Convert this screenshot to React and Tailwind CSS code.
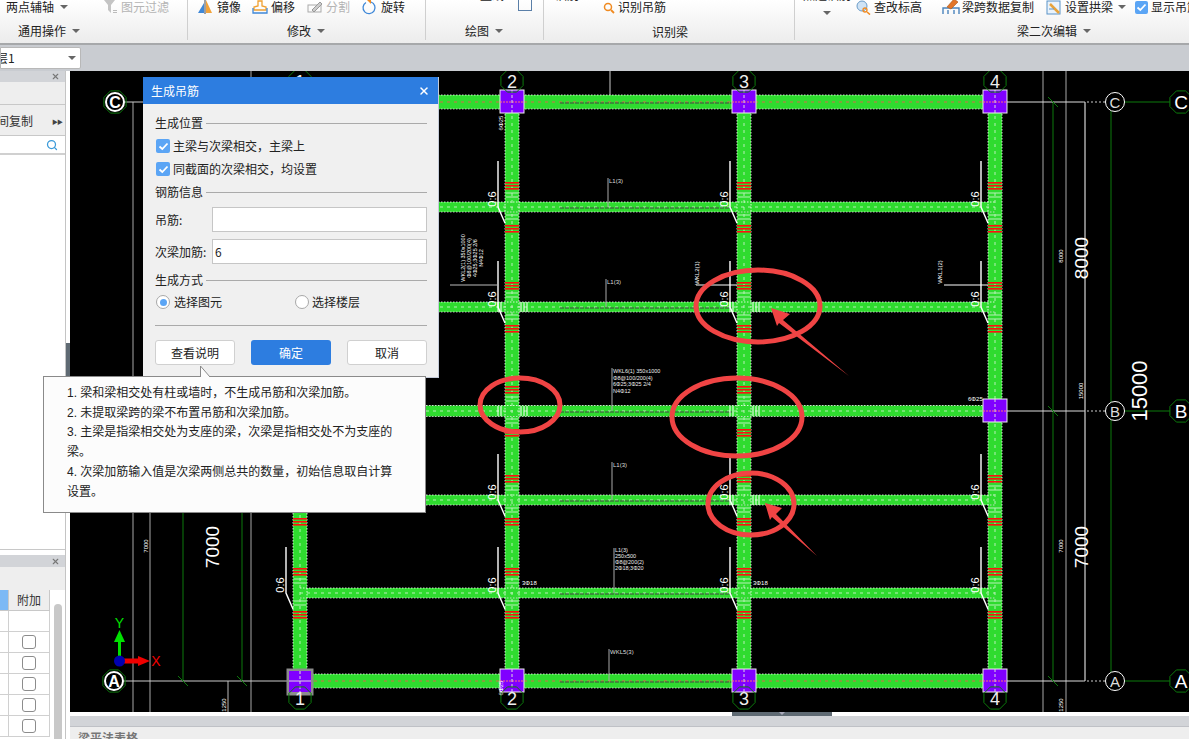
import { Search, X } from "lucide-react";

const hBeams = [
  { y: 102, h: 14 },
  { y: 207, h: 10 },
  { y: 307, h: 10 },
  { y: 411, h: 11 },
  { y: 500, h: 10 },
  { y: 593, h: 10 },
  { y: 681, h: 14 },
];
const vBeams = [300, 512, 744, 995];
const secondary = [207, 307, 411, 500, 593];
const columns = [
  [512, 102],
  [744, 102],
  [995, 102],
  [995, 411],
  [512, 681],
  [744, 681],
  [995, 681],
];
const axisTop = [
  [300, 81, "1"],
  [512, 81, "2"],
  [744, 81, "3"],
  [995, 81, "4"],
];
const axisBottom = [
  [300, 698, "1"],
  [512, 698, "2"],
  [744, 698, "3"],
  [995, 698, "4"],
];
const axisRight = [
  [102, "C"],
  [411, "B"],
  [681, "A"],
];
const tableRows = [0, 1, 2, 3, 4];

const octagon = (cx, cy, r) =>
  Array.from({ length: 8 }, (_, i) => {
    const a = Math.PI / 8 + (i * Math.PI) / 4;
    return `${cx + r * Math.cos(a)},${cy + r * Math.sin(a)}`;
  }).join(" ");

const VText = ({ x, y, size, children, fill = "#fff" }) => (
  <text x={x} y={y} fontSize={size} fill={fill} textAnchor="middle" transform={`rotate(-90 ${x} ${y})`}>
    {children}
  </text>
);

const Stirrups = ({ x, y }) => (
  <g>
    {[-25, -22, -19, 18, 21, 24].map((d) => (
      <rect key={d} x={x - 7} y={y + d} width="14" height="1.6" fill="#ff1010" />
    ))}
    {[-14, -10, 8, 12].map((d) => (
      <line key={d} x1={x - 6} x2={x + 6} y1={y + d} y2={y + d} stroke="#b8f0b8" strokeWidth="1" />
    ))}
  </g>
);

const HangerMark = ({ x, y }) => (
  <g>
    <VText x={x - 16} y={y - 8} size="11">
      0:6
    </VText>
    <path d={`M${x - 14} ${y - 46} V${y} L${x - 7} ${y + 16}`} fill="none" stroke="#fff" strokeWidth="1.4" />
  </g>
);

const Drawing = () => (
  <svg viewBox="70 71 1119 641" className="block h-[641px] w-[1119px] shrink-0 font-['Liberation_Sans',sans-serif]">
    <rect x="70" y="71" width="1119" height="641" fill="#000" />

    {/* dimension lines */}
    {[133, 150, 251, 1043, 1066].map((x) => (
      <line key={x} x1={x} x2={x} y1={x < 300 && x !== 251 ? 102 : 71} y2="712" stroke="#a8a8a8" strokeWidth="1" />
    ))}
    {[183, 242, 1053, 1111].map((x) => (
      <line key={x} x1={x} x2={x} y1="102" y2="681" stroke="#0c7a0c" strokeWidth="1" />
    ))}
    <line x1="1085" x2="1085" y1="102" y2="681" stroke="#fff" strokeWidth="1" />
    <line x1="610" x2="610" y1="71" y2="102" stroke="#ccc" strokeWidth="1" />
    <line x1="228" x2="228" y1="681" y2="712" stroke="#bbb" strokeWidth="1" />
    <line x1="125" x2="290" y1="102" y2="102" stroke="#ccc" strokeWidth="1" />
    <line x1="124" x2="288" y1="681" y2="681" stroke="#ccc" strokeWidth="1" />
    {[102, 411, 681].map((y) => (
      <g key={y}>
        <line x1="1005" x2="1083" y1={y} y2={y} stroke="#ddd" strokeWidth="1" />
        <line x1="1083" x2="1106" y1={y} y2={y} stroke="#ccc" strokeWidth="1" strokeDasharray="2 2" />
        <line x1="1124" x2="1170" y1={y} y2={y} stroke="#0c7a0c" strokeWidth="1" />
        <line x1="1048" x2="1058" y1={y - 5} y2={y + 5} stroke="#0c7a0c" strokeWidth="1" />
      </g>
    ))}
    <line x1="178" x2="188" y1="676" y2="686" stroke="#0c7a0c" strokeWidth="1" />
    <line x1="237" x2="247" y1="676" y2="686" stroke="#0c7a0c" strokeWidth="1" />

    {/* beams */}
    {vBeams.map((x) => (
      <rect key={x} x={x - 7} y="102" width="14" height="579" fill="#2fdb2f" />
    ))}
    {hBeams.map((b) => (
      <rect key={b.y} x="300" y={b.y - b.h / 2} width="695" height={b.h} fill="#2fdb2f" />
    ))}
    {vBeams.map((x) => (
      <g key={x} strokeWidth="0.8">
        <line x1={x - 7} x2={x - 7} y1="102" y2="681" stroke="#fff" strokeDasharray="1.5 1.5" />
        <line x1={x + 7} x2={x + 7} y1="102" y2="681" stroke="#fff" strokeDasharray="1.5 1.5" />
        <line x1={x} x2={x} y1="102" y2="681" stroke="#d8f5d8" strokeDasharray="3 4" />
      </g>
    ))}
    {hBeams.map((b) => (
      <g key={b.y} strokeWidth="0.8">
        <line x1="300" x2="995" y1={b.y - b.h / 2} y2={b.y - b.h / 2} stroke="#fff" strokeDasharray="1.5 1.5" />
        <line x1="300" x2="995" y1={b.y + b.h / 2} y2={b.y + b.h / 2} stroke="#ddd" strokeDasharray="1.5 1.5" />
        <line x1="300" x2="995" y1={b.y} y2={b.y} stroke={b.h === 14 ? "#ff5050" : "#d8f5d8"} strokeDasharray="3 4" />
        <line x1="560" x2="732" y1={b.y + 1} y2={b.y + 1} stroke="#444" strokeDasharray="4 1" strokeWidth="1" />
      </g>
    ))}

    {/* stirrups and hanger bars */}
    {vBeams.map((x) =>
      secondary
        .filter((y) => !(x === 995 && y === 411))
        .filter((y) => !(x === 300 && y < 500))
        .map((y) => <Stirrups key={`${x}-${y}`} x={x} y={y} />)
    )}
    {[512, 744, 995].map((x) =>
      [207, 307, 500, 593].map((y) => <HangerMark key={`${x}-${y}`} x={x} y={y} />)
    )}
    <HangerMark x={300} y={593} />
    {[
      [512, 307],
      [744, 307],
      [512, 411],
      [744, 411],
      [744, 500],
    ].map(([x, y]) => (
      <g key={`${x}t${y}`} stroke="#fff" strokeWidth="1">
        {[-14, -11, 9, 12, 15].map((d) => (
          <line key={d} x1={x + d} x2={x + d} y1={y - 5} y2={y + 5} />
        ))}
      </g>
    ))}

    {/* columns */}
    {columns.map(([x, y]) => (
      <g key={`${x}c${y}`}>
        <rect x={x - 12} y={y - 12} width="24" height="23" fill="#8000ff" stroke="#eee" strokeWidth="1" />
        <line x1={x - 12} x2={x + 12} y1={y} y2={y} stroke="#ff7070" strokeDasharray="2 1" />
        <line x1={x} x2={x} y1={y - 12} y2={y + 11} stroke="#ddd" strokeDasharray="3 2" />
      </g>
    ))}
    <rect x="286.5" y="668.5" width="27" height="27" fill="#8c8c8c" />
    <rect x="289" y="671" width="22" height="21" fill="#8000ff" />
    <line x1="300" x2="300" y1="671" y2="692" stroke="#ddd" strokeDasharray="3 2" />
    <line x1="289" x2="311" y1="681" y2="681" stroke="#ddd" />

    {/* axis bubbles */}
    {axisTop.concat(axisBottom).map(([x, y, t]) => (
      <g key={`${x}a${y}`}>
        <polygon points={octagon(x, y, 12)} fill="none" stroke="#0c7a0c" />
        <text x={x} y={y + 7} fontSize="18" fill="#eee" textAnchor="middle">
          {t}
        </text>
      </g>
    ))}
    {axisRight.map(([y, t]) => (
      <g key={t}>
        <circle cx="1115" cy={y} r="9.5" fill="#000" stroke="#fff" />
        <text x="1115" y={y + 6} fontSize="15" fill="#ddd" textAnchor="middle">
          {t}
        </text>
        <polygon points={octagon(1181, y, 12)} fill="#000" stroke="#0c7a0c" />
        <text x="1181" y={y + 7} fontSize="19" fill="#fff" textAnchor="middle">
          {t}
        </text>
      </g>
    ))}
    {[
      [115, 102, "C"],
      [114, 681, "A"],
    ].map(([x, y, t]) => (
      <g key={t}>
        <polygon points={octagon(x, y, 12)} fill="none" stroke="#0c7a0c" />
        <circle cx={x} cy={y} r="9" fill="#000" stroke="#fff" strokeWidth="2" />
        <text x={x} y={y + 6} fontSize="16" fontWeight="700" fill="#fff" textAnchor="middle">
          {t}
        </text>
      </g>
    ))}

    {/* dimension text */}
    <VText x="1088" y="258" size="19">8000</VText>
    <VText x="1088" y="547" size="19">7000</VText>
    <VText x="1147" y="391" size="22">15000</VText>
    <VText x="219" y="547" size="19">7000</VText>
    <VText x="148" y="546" size="6">7000</VText>
    <VText x="1063" y="256" size="6">8000</VText>
    <VText x="1063" y="546" size="6">7000</VText>
    <VText x="1083" y="391" size="6">15000</VText>
    <VText x="226" y="705" size="6">1250</VText>
    <VText x="1063" y="705" size="6">1250</VText>
    <VText x="503" y="123" size="6">6Φ25</VText>
    <VText x="503" y="688" size="6">6Φ25</VText>
    <text x="968" y="401" fontSize="6" fill="#fff">6Φ25</text>
    <text x="522" y="585" fontSize="6" fill="#fff">3Φ18</text>
    <text x="753" y="585" fontSize="6" fill="#fff">3Φ18</text>

    {/* beam notes */}
    <line x1="608" x2="608" y1="178" y2="207" stroke="#aaa" />
    <text x="609" y="183" fontSize="6" fill="#ddd">L1(3)</text>
    <line x1="606" x2="606" y1="279" y2="307" stroke="#aaa" />
    <text x="607" y="284" fontSize="6" fill="#ddd">L1(3)</text>
    <line x1="612" x2="612" y1="462" y2="500" stroke="#aaa" />
    <text x="613" y="467" fontSize="6" fill="#ddd">L1(3)</text>
    <line x1="612" x2="612" y1="368" y2="411" stroke="#aaa" />
    {["WKL6(1) 350x1000", "Φ8@100/200(4)", "6Φ25;3Φ25 2/4", "N4Φ12"].map((t, i) => (
      <text key={t} x="613" y={373 + i * 6.5} fontSize="5.5" fill="#eee">{t}</text>
    ))}
    <line x1="614" x2="614" y1="548" y2="593" stroke="#aaa" />
    {["L1(3)", "250x500", "Φ8@200(2)", "2Φ18;3Φ20"].map((t, i) => (
      <text key={t} x="615" y={552 + i * 6} fontSize="5.5" fill="#eee">{t}</text>
    ))}
    <line x1="609" x2="609" y1="649" y2="681" stroke="#aaa" />
    <text x="610" y="654" fontSize="6" fill="#ddd">WKL5(3)</text>
    {["WKL2(1) 350x1000", "Φ8@100/200(4)", "4Φ25;3Φ25 2/6", "N4Φ12"].map((t, i) => (
      <VText key={t} x={465 + i * 6} y="258" size="5.5">{t}</VText>
    ))}
    <VText x="699" y="273" size="6">WKL2(1)</VText>
    <VText x="942" y="272" size="6">WKL1(2)</VText>
    <line x1="696" x2="737" y1="285" y2="285" stroke="#fff" />
    <line x1="450" x2="497" y1="285" y2="285" stroke="#bbb" />
    <line x1="944" x2="988" y1="285" y2="285" stroke="#fff" />

    {/* coordinate gizmo */}
    <line x1="119.5" x2="119.5" y1="661" y2="640" stroke="#00e000" strokeWidth="3" />
    <polygon points="119.5,630 114,642 125,642" fill="#00e000" />
    <text x="119.5" y="628" fontSize="14" fill="#00e000" textAnchor="middle">Y</text>
    <line x1="120" x2="140" y1="661" y2="661" stroke="#f00000" strokeWidth="5" />
    <polygon points="150,661 138,656 138,666" fill="#f00000" />
    <text x="156" y="666" fontSize="14" fill="#f00000" textAnchor="middle">X</text>
    <circle cx="119.5" cy="661" r="5.5" fill="#0000b0" />

    {/* hand-drawn markup */}
    <g fill="none" stroke="#f04444" strokeWidth="5">
      <ellipse cx="758" cy="306" rx="62" ry="36" />
      <ellipse cx="520" cy="405" rx="40" ry="27" />
      <ellipse cx="737" cy="417" rx="65" ry="39" />
      <ellipse cx="751" cy="504" rx="43" ry="31" />
    </g>
    <polygon points="771,308 790,314 783,320 849,376 779,323 777,326" fill="#f04444" />
    <polygon points="765,503 782,508 776,514 817,556 772,517 770,520" fill="#f04444" />
  </svg>
);

const Caret = ({ className = "" }) => (
  <span className={`inline-block h-0 w-0 shrink-0 border-x-[4px] border-t-[4px] border-x-transparent border-t-[#666] ${className}`} />
);

const MirrorIcon = () => (
  <svg width="16" height="14" viewBox="0 0 16 14">
    <polygon points="1,13 7,3 7,13" fill="#3f88d8" />
    <polygon points="9,13 9,0 15,13" fill="#f2a33a" />
    <line x1="8" x2="8" y1="0" y2="14" stroke="#444" />
  </svg>
);
const OffsetIcon = () => (
  <svg width="16" height="14" viewBox="0 0 16 14" fill="none">
    <path d="M6 1 H10 V6 L14 7 V10 H2 V7 L6 6 Z" stroke="#f0a030" strokeWidth="1.3" />
    <path d="M1 8 V13 H15 V8" stroke="#3f88d8" strokeWidth="1.3" />
  </svg>
);
const SplitIcon = () => (
  <svg width="16" height="14" viewBox="0 0 16 14" fill="none">
    <rect x="1" y="5" width="13" height="7" stroke="#aaa" />
    <path d="M5 10 L13 2 L15 4 L7 12 Z" fill="#ccc" stroke="#999" />
  </svg>
);
const RotateIcon = () => (
  <svg width="15" height="15" viewBox="0 0 15 15" fill="none">
    <path d="M9 2 A6 6 0 1 1 4 2.5" stroke="#3f88d8" strokeWidth="1.3" />
    <path d="M5 0 L9 0 L9 4 Z" fill="#f08a20" />
  </svg>
);
const LensIcon = () => (
  <svg width="12" height="14" viewBox="0 0 12 14" fill="none">
    <circle cx="5" cy="7" r="3.5" stroke="#f08a20" strokeWidth="1.5" />
    <line x1="8" x2="11" y1="10" y2="13" stroke="#f08a20" strokeWidth="1.8" />
  </svg>
);
const ElevationIcon = () => (
  <svg width="15" height="15" viewBox="0 0 15 15" fill="none">
    <circle cx="6" cy="6" r="5" fill="#cfe3f5" stroke="#6a9cc8" />
    <circle cx="9" cy="10" r="2" stroke="#f08a20" strokeWidth="1.3" />
    <line x1="11" x2="14" y1="12" y2="14.5" stroke="#f08a20" strokeWidth="1.6" />
  </svg>
);
const CopyBeamIcon = () => (
  <svg width="18" height="16" viewBox="0 0 18 16" fill="none">
    <path d="M1 15 V9 H17 V15 M6 15 V11 M12 15 V11" stroke="#4a84bd" strokeWidth="1.4" />
    <path d="M5 8 L12 0 L16 3 L9 10 Z" fill="#e2762a" stroke="#a85518" strokeWidth="0.6" />
  </svg>
);
const ArchIcon = () => (
  <svg width="16" height="15" viewBox="0 0 16 15" fill="none">
    <rect x="1" y="1" width="13" height="13" fill="#eaf3fb" stroke="#5a93c8" />
    <path d="M4 4 L13 13" stroke="#e7a33c" strokeWidth="2.5" />
    <path d="M3 9 H8" stroke="#5a93c8" />
  </svg>
);
const FunnelIcon = () => (
  <svg width="13" height="14" viewBox="0 0 13 14">
    <polygon points="0,0 11,0 7,5 7,13 4,10 4,5" fill="#c4c4c4" />
    <rect x="9" y="10" width="4" height="1" fill="#bbb" />
    <rect x="9" y="12" width="4" height="1" fill="#bbb" />
  </svg>
);

const CheckMark = () => (
  <svg width="11" height="9" viewBox="0 0 11 9" fill="none">
    <path d="M1.5 4.5 L4.3 7 L9.5 1.5" stroke="#fff" strokeWidth="1.8" />
  </svg>
);

const ClippedText = ({ children, className = "" }) => (
  <span className={`-mt-[12px] self-start whitespace-nowrap text-[12px] leading-[14px] text-[#222] ${className}`}>{children}</span>
);

const Toolbar = () => (
  <div className="flex h-[45px] shrink-0 overflow-hidden whitespace-nowrap border-b-2 border-[#a6a8aa] bg-gradient-to-b from-white to-[#ececec] text-[12px] leading-[14px] text-[#222]">
    <div className="h-[40px] w-[188px] shrink-0 border-r border-[#cfcfcf]">
      <div className="flex h-[14px] items-center pl-[6px]">
        <span>两点辅轴</span>
        <Caret className="ml-[6px] border-x-[3px] border-t-[3px]" />
        <span className="ml-[36px]"><FunnelIcon /></span>
        <span className="ml-[4px] text-[#b4b4b4]">图元过滤</span>
      </div>
      <div className="mt-[10px] flex h-[14px] items-center pl-[18px]">
        <span>通用操作</span>
        <Caret className="ml-[6px]" />
      </div>
    </div>
    <div className="h-[40px] w-[238px] shrink-0 border-r border-[#cfcfcf]">
      <div className="flex h-[14px] items-center pl-[9px]">
        <MirrorIcon />
        <span className="ml-[4px]">镜像</span>
        <span className="ml-[11px]"><OffsetIcon /></span>
        <span className="ml-[3px]">偏移</span>
        <span className="ml-[12px]"><SplitIcon /></span>
        <span className="ml-[3px] text-[#b4b4b4]">分割</span>
        <span className="ml-[12px]"><RotateIcon /></span>
        <span className="ml-[4px]">旋转</span>
      </div>
      <div className="mt-[10px] flex h-[14px] items-center pl-[99px]">
        <span>修改</span>
        <Caret className="ml-[6px]" />
      </div>
    </div>
    <div className="h-[40px] w-[118px] shrink-0 border-r border-[#cfcfcf]">
      <div className="flex h-[14px] pl-[54px]">
        <ClippedText>直线</ClippedText>
        <span className="-mt-[2px] ml-[14px] h-[13px] w-[14px] border border-[#5a7fa8] bg-transparent" />
      </div>
      <div className="mt-[10px] flex h-[14px] items-center pl-[39px]">
        <span>绘图</span>
        <Caret className="ml-[6px]" />
      </div>
    </div>
    <div className="h-[40px] w-[251px] shrink-0 border-r border-[#cfcfcf]">
      <div className="flex h-[14px] items-center pl-[11px]">
        <ClippedText>识别</ClippedText>
        <span className="ml-[24px]"><LensIcon /></span>
        <span className="ml-[3px]">识别吊筋</span>
      </div>
      <div className="mt-[11px] h-[14px] pl-[108px]">识别梁</div>
    </div>
    <div className="h-[40px] min-w-0 flex-1">
      <div className="flex h-[14px] items-center pl-[8px]">
        <div className="flex w-[48px] shrink-0 flex-col items-center self-start">
          <ClippedText>点选识别</ClippedText>
          <Caret className="mt-[9px] border-x-[3px] border-t-[3px]" />
        </div>
        <span className="ml-[5px] shrink-0"><ElevationIcon /></span>
        <span className="ml-[3px] shrink-0">查改标高</span>
        <span className="ml-[20px] shrink-0"><CopyBeamIcon /></span>
        <span className="ml-[2px] shrink-0">梁跨数据复制</span>
        <span className="ml-[12px] shrink-0"><ArchIcon /></span>
        <span className="ml-[3px] shrink-0">设置拱梁</span>
        <Caret className="ml-[5px] border-x-[3px] border-t-[3px]" />
        <span className="ml-[9px] flex h-[13px] w-[13px] shrink-0 items-center justify-center rounded-[2px] bg-[#5ba5f5]">
          <CheckMark />
        </span>
        <span className="ml-[3px] shrink-0">显示吊筋</span>
      </div>
      <div className="mt-[10px] flex h-[14px] items-center pl-[222px]">
        <span>梁二次编辑</span>
        <Caret className="ml-[6px]" />
      </div>
    </div>
  </div>
);

const LeftPanels = () => (
  <div className="flex w-[66px] shrink-0 flex-col border-r border-[#c4c4c4] bg-white">
    <div className="flex h-[11px] shrink-0 items-center justify-end bg-[#d2d4d8] pr-[5px]">
      <X size={9} strokeWidth={3} className="text-[#777]" />
    </div>
    <div className="h-[23px] shrink-0 border-b border-[#c8c8c8] bg-[#eeeeee]" />
    <div className="flex h-[31px] shrink-0 items-center justify-between overflow-hidden border-b border-[#c8c8c8] bg-[#eeeeee] pr-[3px] pt-[2px] text-[12px]">
      <span className="-ml-[3px] whitespace-nowrap text-[#333]">间复制</span>
      <span className="text-[6px] tracking-[-1px] text-[#444]">▶▶</span>
    </div>
    <div className="flex h-[19px] shrink-0 items-center justify-end border-b-2 border-[#d0d0d0] pr-[7px]">
      <Search size={12} strokeWidth={2.5} className="text-[#3b9ad9]" />
    </div>
    <div className="h-[395px] shrink-0 border-b border-[#c8c8c8]" />
    <div className="h-[5px] shrink-0" />
    <div className="flex h-[12px] shrink-0 items-center justify-end bg-[#d2d4d8] pr-[5px]">
      <X size={9} strokeWidth={3} className="text-[#777]" />
    </div>
    <div className="h-[23px] shrink-0 bg-[#eeeeee]" />
    <div className="flex min-h-0 flex-1 overflow-hidden">
      <div className="w-[50px] shrink-0">
        <div className="flex h-[21px] border-b border-[#c8c8c8]">
          <div className="w-[9px] border-r border-[#c8c8c8] bg-[#7db9f5]" />
          <div className="flex flex-1 items-center justify-center border-r border-[#c8c8c8] bg-[#eeeeee] text-[12px] text-[#333]">
            附加
          </div>
        </div>
        <div className="flex h-[21px] border-b border-[#d0d0d0]">
          <div className="w-[9px] border-r border-[#d0d0d0]" />
          <div className="flex-1 border-r border-[#d0d0d0]" />
        </div>
        {tableRows.map((r) => (
          <div key={r} className="flex h-[21px] border-b border-[#d0d0d0]">
            <div className="w-[9px] border-r border-[#d0d0d0]" />
            <div className="flex flex-1 items-center justify-center border-r border-[#d0d0d0]">
              <span className="h-[14px] w-[14px] rounded-[3px] border border-[#8c8c8c] bg-white" />
            </div>
          </div>
        ))}
      </div>
      <div className="flex-1 pl-[4px] pt-[14px]">
        <div className="h-[140px] w-[8px] rounded-full bg-[#c8c8c8]" />
      </div>
    </div>
  </div>
);

const Section = ({ title, className = "" }) => (
  <div className={`flex h-[14px] items-center gap-[3px] ${className}`}>
    <span>{title}</span>
    <span className="h-px flex-1 bg-[#aaaaaa]" />
  </div>
);

const CheckRow = ({ label, className = "" }) => (
  <div className={`flex h-[16px] items-center pl-px ${className}`}>
    <span className="flex h-[14px] w-[14px] items-center justify-center rounded-[2px] bg-[#5ba5f5]">
      <CheckMark />
    </span>
    <span className="ml-[3px]">{label}</span>
  </div>
);

const Dialog = () => (
  <div className="absolute left-[143px] top-[77px] w-[296px] border-b border-r border-[#c3cad8] bg-[#f0f0f0] text-[12px] leading-[14px] text-[#222]">
    <div className="flex h-[27px] items-center justify-between bg-[#2d7de0] px-[8px] text-white">
      <span>生成吊筋</span>
      <X size={12} strokeWidth={3} />
    </div>
    <div className="pb-[12px] pl-[12px] pr-[11px] pt-[12px]">
      <Section title="生成位置" />
      <CheckRow label="主梁与次梁相交，主梁上" className="mt-[8px]" />
      <CheckRow label="同截面的次梁相交，均设置" className="mt-[7px]" />
      <Section title="钢筋信息" className="mt-[8px]" />
      <div className="mt-[8px] flex h-[25px] items-center">
        <span className="w-[57px]">吊筋:</span>
        <div className="h-full flex-1 border border-[#c6c6c6] bg-white" />
      </div>
      <div className="mt-[7px] flex h-[25px] items-center">
        <span className="w-[57px]">次梁加筋:</span>
        <div className="flex h-full flex-1 items-center border border-[#c6c6c6] bg-white pl-[2px]">6</div>
      </div>
      <Section title="生成方式" className="mt-[9px]" />
      <div className="mt-[7px] flex h-[16px] items-center pl-px">
        <span className="flex w-[139px] items-center">
          <span className="flex h-[14px] w-[14px] items-center justify-center rounded-full border border-[#a8a8a8] bg-white">
            <span className="h-[7px] w-[7px] rounded-full bg-[#5ba5f5]" />
          </span>
          <span className="ml-[4px]">选择图元</span>
        </span>
        <span className="h-[14px] w-[14px] rounded-full border border-[#a8a8a8] bg-white" />
        <span className="ml-[3px]">选择楼层</span>
      </div>
      <div className="mt-[15px] h-px bg-[#aaaaaa]" />
      <div className="mt-[14px] flex h-[25px] gap-[16px]">
        <button type="button" className="w-[80px] rounded-[3px] border border-[#d0d0d0] bg-white">
          查看说明
        </button>
        <button type="button" className="w-[80px] rounded-[3px] bg-[#2d7de0] text-white">
          确定
        </button>
        <button type="button" className="w-[80px] rounded-[3px] border border-[#d0d0d0] bg-white">
          取消
        </button>
      </div>
    </div>
  </div>
);

const HelpTip = () => (
  <div className="absolute left-[43px] top-[376px] h-[137px] w-[383px] border border-[#8a8a8a] bg-[#fcfcfc] pl-[23px] pt-[7px] font-['Liberation_Sans','Noto_Sans_CJK_SC',sans-serif] text-[12px] leading-[19.7px] text-[#222]">
    <svg width="11" height="12" viewBox="0 0 11 12" className="absolute -top-[11px] left-[156px]">
      <polygon points="1,0 1,11 10,11" fill="#fcfcfc" />
      <path d="M0.5 0 V11 M0.5 0 L10 11" stroke="#8a8a8a" fill="none" />
    </svg>
    <div className="w-[332px]">
      <p>1. 梁和梁相交处有柱或墙时，不生成吊筋和次梁加筋。</p>
      <p>2. 未提取梁跨的梁不布置吊筋和次梁加筋。</p>
      <p>3. 主梁是指梁相交处为支座的梁，次梁是指相交处不为支座的梁。</p>
      <p>4. 次梁加筋输入值是次梁两侧总共的数量，初始信息取自计算设置。</p>
    </div>
  </div>
);

export default function App() {
  return (
    <div className="relative flex h-[739px] w-[1189px] flex-col overflow-hidden bg-white font-['Noto_Sans_CJK_SC','Liberation_Sans',sans-serif]">
      <Toolbar />
      <div className="flex h-[26px] shrink-0 items-center bg-[#c9ccd1]">
        <div className="flex h-[22px] w-[81px] items-center justify-between overflow-hidden rounded-r-[2px] border border-[#b8b8b8] bg-white pr-[4px] text-[12px] text-[#222]">
          <span className="-ml-[5px] whitespace-nowrap">层1</span>
          <Caret className="border-x-[3px] border-t-[3px]" />
        </div>
      </div>
      <div className="flex min-h-0 flex-1 overflow-hidden">
        <LeftPanels />
        <div className="w-[4px] shrink-0 bg-white pt-[272px]">
          <div className="h-[33px] bg-[#5f6a73]" />
        </div>
        <div className="flex min-w-0 flex-1 flex-col overflow-hidden">
          <Drawing />
          <div className="h-[4px] shrink-0 bg-white pl-[662px]">
            <div className="flex h-full w-[100px] justify-center bg-[#5f6a73]">
              <span className="h-0 w-0 border-x-[3px] border-t-[3px] border-x-transparent border-t-[#aab]" />
            </div>
          </div>
          <div className="h-[11px] shrink-0 border-b border-[#bfc1c6] bg-[#d2d4d8]" />
          <div className="min-h-0 flex-1 overflow-hidden bg-[#eeeeee] pl-[8px] pt-[4px] text-[12px] font-semibold leading-[14px] text-[#777]">
            梁平法表格
          </div>
        </div>
      </div>
      <Dialog />
      <HelpTip />
    </div>
  );
}
